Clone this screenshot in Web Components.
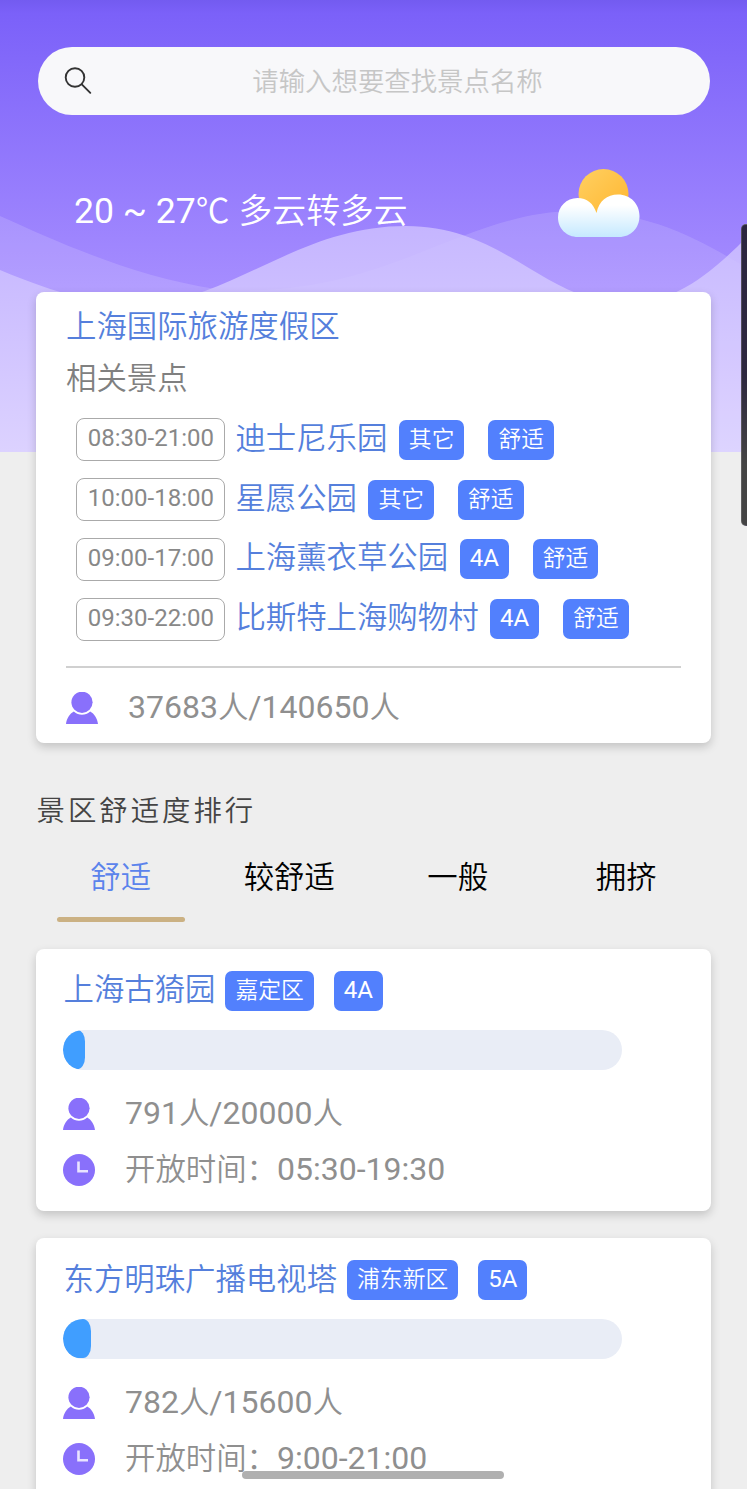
<!DOCTYPE html>
<html lang="zh-CN">
<head>
<meta charset="utf-8">
<title>景区舒适度</title>
<style>
    html, body {
        margin: 0;
        height: 1489px;
        overflow: hidden;
    }

    body {
        background: #eee;
        font-family: Roboto, "Noto Sans CJK SC", sans-serif;
        font-size: 32px;
    }
</style>
</head>
<body>
<scenic-app></scenic-app>

<script>
const ICONS = {
    user: `<svg viewBox="0 0 32 32"><circle cx="16" cy="10.300" r="10.600"/><path d="M0 32C.6 26.500 3.800 21.500 7.800 19.500C12.800 23.800 19.200 23.800 24.200 19.500C28.200 21.500 31.400 26.500 32 32Z"/></svg>`,
    clock: `<svg viewBox="0 0 32 32"><circle cx="16" cy="16" r="16"/><path d="M15.500 7.500V17.300H25" fill="none" stroke="#e9e4ff" stroke-width="2.600"/></svg>`
};

// CJK glyphs are set slightly smaller than the latin digits beside them
function mixedText(text) {
    return text.replace(/[\u2103\u3000-\u9fff\uff00-\uffef]+/g, run => `<span class="cjk">${run}</span>`);
}

const MIXED_STYLE = `.cjk { font-family: "Noto Sans CJK SC", sans-serif; font-size: 0.95em; font-weight: 350; line-height: 1; }`;

class BaseElement extends HTMLElement {
    constructor() {
        super();
        this.attachShadow({mode: "open"});
    }

    connectedCallback() {
        this.shadowRoot.innerHTML = `<style>${MIXED_STYLE}${this.styles()}</style>${this.render()}`;
    }

    attr(name) {
        return this.getAttribute(name) || "";
    }
}

class SearchBox extends BaseElement {
    styles() {
        return `
            :host {
                display: flex;
                align-items: center;
                box-sizing: border-box;
                height: 68px;
                margin: 0 37px 0 38px;
                padding: 0 26px;
                border-radius: 34px;
                background: #f8f8fa;
            }
            svg { width: 28px; height: 28px; flex: none; }
            .placeholder {
                flex: 1;
                padding: 2px 0 0 19px;
                text-align: center;
                color: #c6c6c6;
                font-size: 27.8px;
                line-height: 40px;
            }
        `;
    }

    render() {
        return `
            <svg viewBox="0 0 28 28" fill="none" stroke="#333" stroke-width="1.900" stroke-linecap="round">
                <circle cx="11" cy="10.500" r="9.300"/><path d="M17.800 17.300L26.300 25.800"/>
            </svg>
            <div class="placeholder">${mixedText(this.attr("placeholder"))}</div>
        `;
    }
}

class WeatherBar extends BaseElement {
    styles() {
        return `
            :host {
                display: flex;
                justify-content: space-between;
                align-items: center;
                height: 72px;
                margin: 51px 106px 0 74px;
                color: #fff;
                font-size: 35.600px;
            }
            .text { padding-top: 19px; line-height: 44px; }
            svg { width: 84px; height: 72px; }
        `;
    }

    render() {
        return `
            <div class="text">${mixedText(this.attr("text"))}</div>
            <svg viewBox="0 0 84 72">
                <defs>
                    <linearGradient id="sun" x1="0" y1="0" x2="1" y2="1">
                        <stop offset="0" stop-color="#ffd061"/><stop offset="1" stop-color="#ffb52f"/>
                    </linearGradient>
                    <linearGradient id="cloud" x1="0" y1="0" x2="0" y2="1">
                        <stop offset="0.250" stop-color="#fff"/><stop offset="1" stop-color="#c5e9ff"/>
                    </linearGradient>
                </defs>
                <circle cx="46.500" cy="28" r="25" fill="url(#sun)"/>
                <path d="M39.500 47C42 35 50 28.500 61 28.500C73.500 28.500 82.500 38 82.500 50C82.500 62 74 71 62 71H21C9.500 71 1 62.500 1 51.500C1 40.500 9.500 32 20.500 32C30 32 36.500 37.500 39.500 47Z" fill="url(#cloud)"/>
            </svg>
        `;
    }
}

class HeroHeader extends BaseElement {
    styles() {
        return `
            :host {
                display: block;
                position: relative;
                box-sizing: border-box;
                height: 452px;
                padding-top: 46.500px;
                margin-bottom: -160px;
            }
            .bg { position: absolute; inset: 0; width: 100%; height: 100%; z-index: -1; }
        `;
    }

    render() {
        return `
            <svg class="bg" viewBox="0 0 747 452" preserveAspectRatio="none">
                <defs>
                    <linearGradient id="sky" x1="0" y1="0" x2="0" y2="1">
                        <stop offset="0" stop-color="#735bf0"/>
                        <stop offset="0.030" stop-color="#7b61f9"/>
                        <stop offset="0.640" stop-color="#a68dff"/>
                        <stop offset="1" stop-color="#bba8ff"/>
                    </linearGradient>
                    <linearGradient id="front" gradientUnits="userSpaceOnUse" x1="0" y1="225" x2="0" y2="452">
                        <stop offset="0" stop-color="#c5b5ff"/>
                        <stop offset="1" stop-color="#dcd2ff"/>
                    </linearGradient>
                </defs>
                <rect width="747" height="452" fill="url(#sky)"/>
                <path d="M0 216C60 243 135 277 216 289V452H0Z" fill="#fff" fill-opacity="0.150"/>
                <path d="M250 290C390 290 470 211 575 211C650 211 700 240 747 268V452H250Z" fill="#fff" fill-opacity="0.090"/>
                <path d="M0 270C100 312 150 312 205 291C270 267 325 226 406 226C490 226 530 280 588 297C650 314 690 295 747 237V452H0Z" fill="url(#front)"/>
                <path d="M250 290C390 290 470 211 575 211C650 211 700 240 747 268V452H250Z" fill="#fff" fill-opacity="0.050"/>
            </svg>
            <slot></slot>
        `;
    }
}

class InfoCard extends BaseElement {
    styles() {
        return `
            :host {
                display: block;
                position: relative;
                box-sizing: border-box;
                margin: 0 36px 27.500px;
                border-radius: 8px;
                background: #fff;
                box-shadow: 0 4px 10px rgba(0, 0, 0, 0.180);
            }
        `;
    }

    render() {
        return `<slot></slot>`;
    }
}

class TagBadge extends BaseElement {
    styles() {
        return `
            :host {
                display: block;
                box-sizing: border-box;
                height: 40px;
                padding: 0 10px;
                border-radius: 7px;
                background: #5280fd;
                color: #fff;
                font-size: 24px;
                line-height: 38px;
                white-space: nowrap;
            }
        `;
    }

    render() {
        return mixedText(this.attr("label"));
    }
}

class SpotRow extends BaseElement {
    styles() {
        return `
            :host { display: flex; align-items: center; height: 59.800px; }
            .time {
                box-sizing: border-box;
                width: 149px;
                height: 43px;
                border: 1.500px solid #aaa;
                border-radius: 8px;
                color: #888;
                font-size: 24px;
                line-height: 38px;
                text-align: center;
            }
            .name { margin: 0 11.500px 0 10px; color: #557fdc; line-height: 44px; padding-bottom: 4px; }
            .tags { display: flex; gap: 24px; }
        `;
    }

    render() {
        const tags = this.attr("tags").split(",").map(t => `<tag-badge label="${t}"></tag-badge>`).join("");
        return `
            <div class="time">${this.attr("time")}</div>
            <div class="name">${mixedText(this.attr("name"))}</div>
            <div class="tags">${tags}</div>
        `;
    }
}

class IconLine extends BaseElement {
    styles() {
        return `
            :host {
                display: flex;
                align-items: center;
                gap: 30px;
                height: 56px;
                color: #8f8f8f;
                fill: #8970fb;
            }
            svg { display: block; width: 32px; height: 32px; }
            .text { line-height: 44px; padding-bottom: 2px; }
        `;
    }

    render() {
        return `${ICONS[this.attr("icon")]}<div class="text">${mixedText(this.attr("text"))}</div>`;
    }
}

class RelatedSpots extends BaseElement {
    styles() {
        return `
            :host { display: block; box-sizing: border-box; height: 451px; padding: 8px 30px 0; }
            .title { color: #557fdc; line-height: 52px; }
            .sub { color: #808080; line-height: 52px; }
            .rows { padding: 6px 0 0 10.400px; }
            hr { margin: 16.500px 0 12px; border: 0; border-top: 2px solid #d0d0d0; }
        `;
    }

    render() {
        return `
            <div class="title">${mixedText(this.attr("title-text"))}</div>
            <div class="sub">${mixedText("相关景点")}</div>
            <div class="rows"><slot></slot></div>
            <hr>
            <icon-line icon="user" text="${this.attr("people")}"></icon-line>
        `;
    }
}

class RankTabs extends BaseElement {
    styles() {
        return `
            :host { display: block; padding: 0 36.500px; }
            h2 {
                margin: 42.500px 0 0;
                color: #444;
                font-size: 28.400px;
                font-weight: 350;
                letter-spacing: 3px;
                line-height: 52px;
            }
            .tabs { display: grid; grid-template-columns: repeat(4, 1fr); height: 84px; }
            .tab {
                display: flex;
                flex-direction: column;
                align-items: center;
                justify-content: space-between;
                line-height: 79px;
            }
            .tab.active { color: #5b83ec; }
            .tab.active::after {
                content: "";
                width: 128px;
                height: 5px;
                border-radius: 2.500px;
                background: #cbb183;
            }
        `;
    }

    render() {
        const tabs = this.attr("tabs").split(",");
        return `
            <h2>${this.attr("heading")}</h2>
            <div class="tabs">
                ${tabs.map((t, i) => `<div class="tab${i === 0 ? " active" : ""}"><div>${mixedText(t)}</div></div>`).join("")}
            </div>
        `;
    }
}

class ScenicItem extends BaseElement {
    styles() {
        return `
            :host { display: block; box-sizing: border-box; height: 262px; padding: 13px 27px 0; }
            .head { display: flex; align-items: center; height: 58px; }
            .name { margin: 0 10px 0 0.500px; color: #557fdc; line-height: 44px; padding-bottom: 3px; }
            .tags { display: flex; gap: 20px; }
            .track {
                width: 559px;
                height: 40px;
                margin: 10px 0 16px;
                border-radius: 20px;
                background: #e9edf6;
                overflow: hidden;
            }
            .fill {
                height: 39px;
                border-radius: 15px 8px 8px 15px / 19.500px 12px 12px 19.500px;
                background: #409eff;
            }
        `;
    }

    render() {
        const tags = this.attr("tags").split(",").map(t => `<tag-badge label="${t}"></tag-badge>`).join("");
        return `
            <div class="head">
                <div class="name">${mixedText(this.attr("name"))}</div>
                <div class="tags">${tags}</div>
            </div>
            <div class="track"><div class="fill" style="width: ${this.attr("percent")}%"></div></div>
            <icon-line icon="user" text="${this.attr("people")}"></icon-line>
            <icon-line icon="clock" text="开放时间：${this.attr("open")}"></icon-line>
        `;
    }
}

class ScenicApp extends BaseElement {
    styles() {
        return `
            :host { display: block; position: relative; height: 1489px; overflow: hidden; isolation: isolate; }
            rank-tabs { margin-bottom: 27px; }
            .edge {
                position: absolute;
                top: 224px;
                right: -6px;
                width: 12px;
                height: 302px;
                border-radius: 5px;
                border: 1px solid rgba(120, 120, 120, 0.500);
                box-sizing: border-box;
                background: linear-gradient(#2b2540, #2d2740 50%, #444 80%);
            }
            .home-bar {
                position: absolute;
                left: 242px;
                top: 1470.500px;
                width: 262px;
                height: 8px;
                border-radius: 4px;
                background: #b0b0b0;
            }
        `;
    }

    render() {
        return `
            <hero-header>
                <search-box placeholder="请输入想要查找景点名称"></search-box>
                <weather-bar text="20 ~ 27℃ 多云转多云"></weather-bar>
            </hero-header>
            <info-card>
                <related-spots title-text="上海国际旅游度假区" people="37683人/140650人">
                    <spot-row time="08:30-21:00" name="迪士尼乐园" tags="其它,舒适"></spot-row>
                    <spot-row time="10:00-18:00" name="星愿公园" tags="其它,舒适"></spot-row>
                    <spot-row time="09:00-17:00" name="上海薰衣草公园" tags="4A,舒适"></spot-row>
                    <spot-row time="09:30-22:00" name="比斯特上海购物村" tags="4A,舒适"></spot-row>
                </related-spots>
            </info-card>
            <rank-tabs heading="景区舒适度排行" tabs="舒适,较舒适,一般,拥挤"></rank-tabs>
            <info-card>
                <scenic-item name="上海古猗园" tags="嘉定区,4A" percent="4" people="791人/20000人" open="05:30-19:30"></scenic-item>
            </info-card>
            <info-card>
                <scenic-item name="东方明珠广播电视塔" tags="浦东新区,5A" percent="5" people="782人/15600人" open="9:00-21:00"></scenic-item>
            </info-card>
            <div class="edge"></div>
            <div class="home-bar"></div>
        `;
    }
}

customElements.define("search-box", SearchBox);
customElements.define("weather-bar", WeatherBar);
customElements.define("hero-header", HeroHeader);
customElements.define("info-card", InfoCard);
customElements.define("tag-badge", TagBadge);
customElements.define("spot-row", SpotRow);
customElements.define("icon-line", IconLine);
customElements.define("related-spots", RelatedSpots);
customElements.define("rank-tabs", RankTabs);
customElements.define("scenic-item", ScenicItem);
customElements.define("scenic-app", ScenicApp);
</script>
</body>
</html>
